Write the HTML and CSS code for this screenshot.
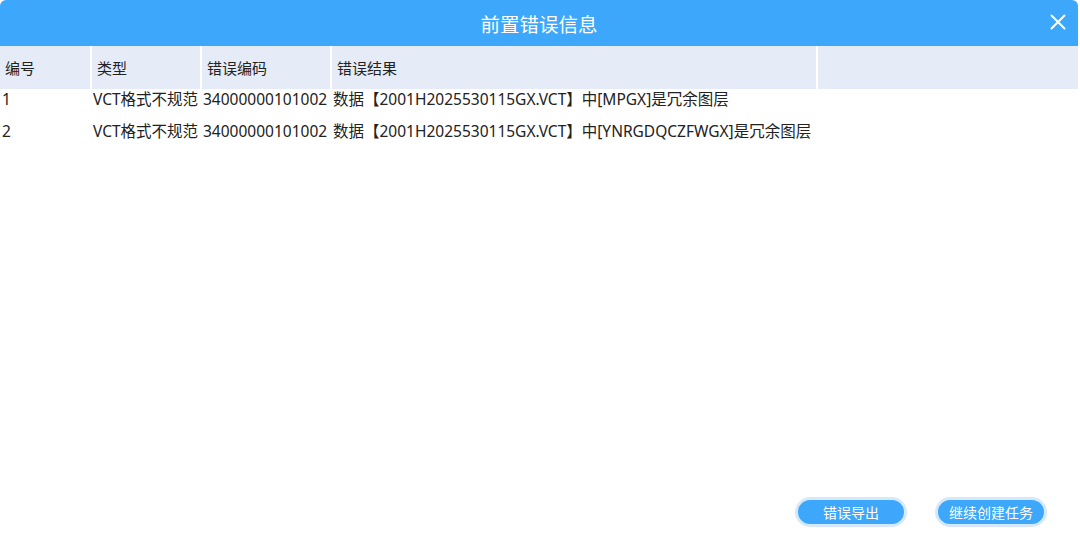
FILE: index.html
```html
<!DOCTYPE html>
<html lang="zh-CN">
<head>
<meta charset="UTF-8" />
<title>前置错误信息</title>
<link rel="stylesheet" href="styles.css">
</head>
<body>
  <div class="dialog">
    <header class="dialog-head">
      <h2>前置错误信息</h2>
      <button class="close" aria-label="关闭">
        <svg width="16" height="16" viewBox="0 0 16 16"><path d="M1.5 1.5 L14.5 14.5 M14.5 1.5 L1.5 14.5" stroke="#fff" stroke-width="2" stroke-linecap="round"/></svg>
      </button>
    </header>

    <div class="table-wrap">
      <table class="grid">
        <colgroup>
          <col style="width:91px">
          <col style="width:110px">
          <col style="width:130px">
          <col style="width:486px">
          <col>
        </colgroup>
        <thead>
          <tr><th>编号</th><th>类型</th><th>错误编码</th><th>错误结果</th><th></th></tr>
        </thead>
        <tbody>
          <tr><td>1</td><td>VCT格式不规范</td><td>34000000101002</td><td>数据【2001H2025530115GX.VCT】中[MPGX]是冗余图层</td><td></td></tr>
          <tr><td>2</td><td>VCT格式不规范</td><td>34000000101002</td><td>数据【2001H2025530115GX.VCT】中[YNRGDQCZFWGX]是冗余图层</td><td></td></tr>
        </tbody>
      </table>
    </div>

    <div class="actions">
      <button class="btn">错误导出</button>
      <button class="btn">继续创建任务</button>
    </div>
  </div>
</body>
</html>
```

FILE: styles.css
```css
* {
  box-sizing: border-box;
}
html, body {
  margin: 0;
  padding: 0;
  height: 100%;
  background-color: #fff;
  font-family: "Noto Sans", "Noto Sans CJK SC", sans-serif;
  color: #222;
}

.dialog {
  width: 1078px;
  height: 540px;
  display: flex;
  flex-direction: column;
  border-radius: 6px 6px 0 0;
  overflow: hidden;
}

.dialog-head {
  position: relative;
  height: 46px;
  flex: none;
  background-color: #3ca7fb;
  display: flex;
  align-items: center;
  justify-content: center;
}
.dialog-head h2 {
  margin: 0;
  font-size: 19.5px;
  font-weight: 400;
  color: #fff;
}
.close {
  position: absolute;
  right: 12px;
  top: 14px;
  width: 16px;
  height: 16px;
  padding: 0;
  border: none;
  background: none;
  cursor: pointer;
  display: flex;
}

.table-wrap {
  flex: 1;
}
.grid {
  width: 100%;
  border-collapse: collapse;
  table-layout: fixed;
  font-size: 15.5px;
}
.grid th {
  height: 43px;
  padding: 0 5px;
  text-align: left;
  font-size: 15px;
  font-weight: 400;
  background-color: #e5ebf7;
  border-right: 2px solid #fff;
}
.grid th:last-child {
  border-right: none;
}
.grid td {
  height: 32px;
  padding: 0 2px 12px;
  line-height: 20px;
  vertical-align: top;
  white-space: nowrap;
  overflow: visible;
}

.actions {
  display: flex;
  justify-content: flex-end;
  gap: 28px;
  padding: 0 31px 13px 0;
}
.btn {
  width: 112px;
  height: 30px;
  border: 3px solid #d6e8fc;
  border-radius: 15px;
  background-color: #3ca7fb;
  color: #fff;
  font-family: inherit;
  font-size: 14px;
  padding: 0;
  cursor: pointer;
}
```
